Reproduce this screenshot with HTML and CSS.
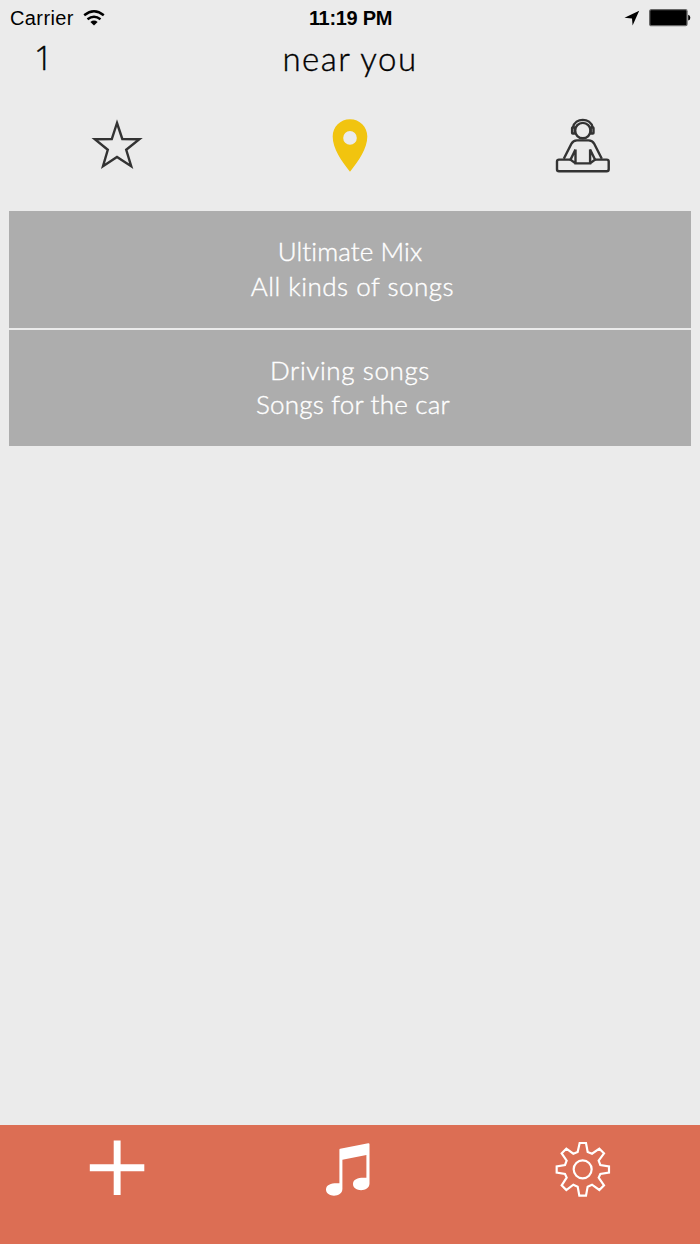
FILE: index.html
```
<!DOCTYPE html>
<html lang="en">
  <head>
    <meta charset="utf-8">
    <title>near you</title>
    <link rel="stylesheet" href="styles.css">
  </head>
  <body>
    <div class="status-bar">
      <div class="carrier">
        <span>Carrier</span>
        <svg class="wifi" viewBox="0 0 22 16">
          <path d="M1.2 5.3Q11 -2.7 20.8 5.3M4.5 9.3Q11 4.2 17.5 9.3" fill="none" stroke="#000" stroke-width="2.4"/>
          <path d="M7.4 12Q11 9.2 14.6 12L11 15.6Z"/>
        </svg>
      </div>
      <div class="time">11:19 PM</div>
      <div class="indicators">
        <svg class="location" viewBox="0 0 16 16">
          <path d="M15.2 0.8L0.5 7.8L8 8.4L8.6 15.4Z"/>
        </svg>
        <svg class="battery" viewBox="0 0 42 18">
          <rect x="0.7" y="0.7" width="37.3" height="16" rx="1.5" stroke="#666" stroke-width="1.3"/>
          <path d="M39.2 5.8Q41.3 6.4 41.3 8.7Q41.3 11 39.2 11.6Z"/>
        </svg>
      </div>
    </div>

    <header>
      <span class="count">1</span>
      <h1>near you</h1>
      <span></span>
    </header>

    <nav class="tabs">
      <svg viewBox="0 0 60 60">
        <path class="line" d="M30 8L35.3 24L52.4 24.2L39.2 34.8L44.2 51.2L30 42L16 51.2L20.8 34.8L7.8 24.2L24.8 24Z"/>
      </svg>
      <svg class="active" viewBox="0 0 60 60">
        <path fill-rule="evenodd" d="M30 4.3C20.3 4.3 12.7 11.9 12.7 21.6C12.7 33.4 21.3 46 30 56.7C38.7 46 47.3 33.4 47.3 21.6C47.3 11.9 39.7 4.3 30 4.3ZM30 16.1A6.8 6.8 0 1 1 30 29.7A6.8 6.8 0 1 1 30 16.1Z"/>
      </svg>
      <svg viewBox="0 0 60 60">
        <g class="line">
          <circle cx="29.8" cy="15.6" r="7.7"/>
          <path d="M20 12.5C22 2.3 37.6 2.3 39.6 12.5"/>
          <rect x="19.1" y="12.5" width="2.8" height="6" rx="0.6"/>
          <rect x="37.7" y="12.5" width="2.8" height="6" rx="0.6"/>
          <path d="M10.8 43.8L18.4 28.8Q20.2 25.4 24 25.4H35.6Q39.4 25.4 41.2 28.8L48.8 43.8"/>
          <path d="M17.5 44.6H6Q4 44.6 4 46.6V54.3Q4 56.3 6 56.3H53.7Q55.7 56.3 55.7 54.3V46.6Q55.7 44.6 53.7 44.6H42"/>
          <path d="M22.5 34.5V48.4H37.1V34.5L42 44.6L37.1 48.4M22.5 34.5L17.5 44.6L22.5 48.4"/>
        </g>
      </svg>
    </nav>

    <main class="playlists">
      <div class="playlist">
        <p class="mix">Ultimate Mix</p>
        <p class="kinds">All kinds of songs</p>
      </div>
      <div class="playlist">
        <p class="driving">Driving songs</p>
        <p class="car">Songs for the car</p>
      </div>
    </main>

    <footer>
      <svg viewBox="0 0 60 60">
        <path d="M26.7 1.5H33.6V25.3H57.3V32.3H33.6V56H26.7V32.3H2.8V25.3H26.7Z"/>
      </svg>
      <svg viewBox="0 0 60 60">
        <path d="M20.2 9.8L48.2 4.3Q49.5 4.1 49.5 5.3V44.5C49.5 53.3 33 53.3 33 45C33 39.5 39.5 38.2 46.4 38.8V16L22.4 20.8V50C22.4 58.8 6 58.8 6 50.6C6 45 12.5 43.8 19.4 44.3V10.8Q19.4 10 20.2 9.8Z"/>
      </svg>
      <svg viewBox="25 27 180 180">
        <g class="gear">
          <circle cx="114" cy="118" r="27"/>
          <path d="M105 39H124L129 66L142 71L164 56L178 70L162 92L167 105L193 109V128L167 132L162 143L178 166L164 180L142 164L129 170L124 197H104L99 170L86 164L65 180L51 166L66 143L61 132L36 128V109L61 105L66 92L51 70L65 56L86 71L99 66Z"/>
        </g>
      </svg>
    </footer>
  </body>
</html>
```
FILE: styles.css
```
* {
  box-sizing: border-box;
}
body {
  display: flex;
  flex-direction: column;
  height: 1244px;
  margin: 0;
  background-color: #ebebeb;
  color: #000;
  font-family: Lato, sans-serif;
  font-weight: 300;
}
h1,
p {
  margin: 0;
  font-weight: 300;
  -webkit-text-stroke: 0.4px;
}
svg {
  display: block;
}
.status-bar {
  display: grid;
  grid-template-columns: 1fr 1fr 1fr;
  align-items: center;
  height: 36px;
  padding: 0 9px 0 10px;
  font-family: "Liberation Sans", Arial, sans-serif;
  font-size: 20px;
  font-weight: 400;
}
.carrier {
  display: flex;
  align-items: center;
  gap: 9px;
  letter-spacing: 0.4px;
}
.wifi {
  width: 22px;
  height: 16px;
}
.time {
  font-weight: 700;
  text-align: center;
  letter-spacing: -0.3px;
}
.indicators {
  display: flex;
  align-items: center;
  justify-content: flex-end;
  gap: 9px;
}
.location {
  width: 16px;
  height: 16px;
}
.battery {
  width: 42px;
  height: 18px;
}
header {
  display: grid;
  grid-template-columns: 1fr auto 1fr;
  height: 68px;
  line-height: 45px;
}
h1 {
  font-size: 33px;
  letter-spacing: 1.5px;
}
.count {
  padding-left: 34px;
  font-family: "Open Sans", sans-serif;
  font-size: 33px;
  line-height: 44px;
  -webkit-text-stroke: 0.4px;
}
.tabs,
footer {
  display: grid;
  grid-template-columns: repeat(3, 1fr);
  justify-items: center;
}
.tabs {
  height: 107px;
  padding-top: 11px;
}
.tabs svg,
footer svg {
  width: 60px;
  height: 60px;
}
.line {
  fill: none;
  stroke: #333;
  stroke-width: 2.4;
}
.active {
  fill: #f1c40f;
}
.playlists {
  display: flex;
  flex: 1;
  flex-direction: column;
  gap: 2px;
  padding: 0 9px;
}
.playlist {
  height: 116.5px;
  padding-top: 23px;
  background-color: #adadad;
  color: #fff;
  font-size: 26px;
  line-height: 34.5px;
  text-align: center;
}
.mix {
  letter-spacing: 0.1px;
}
.kinds {
  padding-left: 5px;
  letter-spacing: 0.5px;
}
.driving {
  letter-spacing: 0.6px;
}
.car {
  padding-left: 6px;
  letter-spacing: 0.2px;
}
footer {
  height: 119px;
  padding-top: 14px;
  background-color: #dc6e54;
  fill: #fff;
}
.gear {
  fill: none;
  stroke: #fff;
  stroke-width: 6.5;
}
```
